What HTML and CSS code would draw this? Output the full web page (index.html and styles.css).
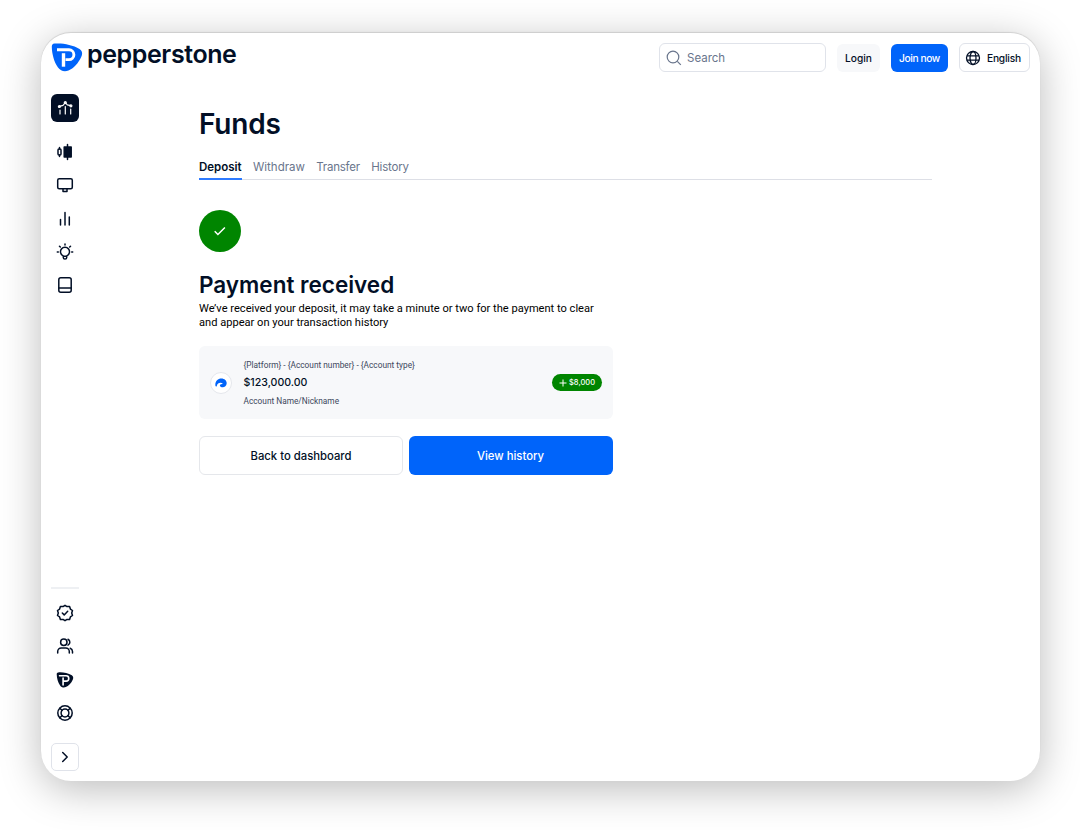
FILE: index.html
```html
<!DOCTYPE html>
<html lang="en">
<head>
    <meta charset="UTF-8">
    <meta name="viewport" content="width=device-width, initial-scale=1.0">
    <title>Pepperstone - Funds</title>
    <link rel="stylesheet" href="styles.css">
</head>
<body>
    <div class="window">
        <header class="header">
            <a class="logo">
                <svg class="logo-mark" viewBox="0 0 31 29">
                    <path d="M3 .6C10-.2 21 1.500 28 6c3 2 3.200 5 1.700 8C27 20 22 25.500 17 27.500c-4 1.500-8 .5-10.500-3C2.500 19 .5 11 .3 4 .2 2 1 .9 3 .6z" fill="#0064fa"/>
                    <path d="M5.500 6.800H17.500a4.900 4.900 0 0 1 0 9.800H14" fill="none" stroke="#fff" stroke-width="2.900"/>
                    <path d="M12 10.200v13.500" fill="none" stroke="#fff" stroke-width="3.400"/>
                </svg>
                <span class="logo-text">pepperstone</span>
            </a>
            <div class="header-actions">
                <div class="search">
                    <svg class="search-icon" viewBox="0 0 16 16"><circle cx="7" cy="7" r="5.800"/><path d="M11.300 11.300l3.500 3.500"/></svg>
                    <span>Search</span>
                </div>
                <button class="btn btn-login">Login</button>
                <button class="btn btn-join">Join now</button>
                <button class="btn btn-lang">
                    <svg class="globe" viewBox="0 0 16 16"><circle cx="8" cy="8" r="6.500"/><ellipse cx="8" cy="8" rx="3" ry="6.500"/><path d="M2 5.800h12M2 10.200h12"/></svg>
                    <span>English</span>
                </button>
            </div>
        </header>

        <div class="content">
            <nav class="sidebar">
                <a class="nav-active">
                    <svg class="icon icon-light" viewBox="0 0 18 18"><path d="M4 11v4M9.300 7.500V15M14.700 10v5M3.500 7.300L7 6.300l2.300-2.600 2 2.100 3.400.800"/><circle cx="3.400" cy="7.500" r="1"/><circle cx="9.300" cy="3.600" r="1"/><circle cx="14.900" cy="6.800" r="1"/></svg>
                </a>
                <div class="nav-group">
                    <svg class="icon" viewBox="0 0 18 18"><rect x="2" y="6" width="3" height="6" rx="1"/><path d="M3.500 4.500V6M3.500 12v1.500M11.500 1.500v15"/><rect x="8.200" y="4" width="7" height="10" fill="#020f26"/></svg>
                    <svg class="icon" viewBox="0 0 18 18"><rect x="1.700" y="2.700" width="14.600" height="10" rx="1.500"/><path d="M7 13v2.500h4V13"/></svg>
                    <svg class="icon" viewBox="0 0 18 18"><path d="M4.500 9.500v5.500M9 2.500V15M13.300 7V15"/></svg>
                    <svg class="icon" viewBox="0 0 18 18"><path d="M7.300 12.900a4.500 4.500 0 1 1 3.400 0v1.500a1.700 1.700 0 0 1-3.400 0zM7.300 13.200h3.400M9 1v1M1.300 9h1M15.700 9h1M3.500 3.200l.8.8M14.500 3.200l-.8.8"/></svg>
                    <svg class="icon" viewBox="0 0 18 18"><rect x="2.800" y="1.700" width="12.400" height="14.600" rx="2"/><path d="M3 12h12"/></svg>
                </div>
                <div class="nav-bottom">
                    <svg class="icon" viewBox="0 0 18 18"><path d="M9 1.300l2 1.300 2.600 0 .8 2.500 2.100 1.400L15.700 9l.8 2.500-2.100 1.400-.8 2.500H11L9 16.700l-2-1.300H4.400l-.8-2.500-2.100-1.400L2.300 9l-.8-2.500 2.100-1.400.8-2.500H7z"/><path d="M6.300 9l1.900 1.900 3.500-3.600"/></svg>
                    <svg class="icon" viewBox="0 0 18 18"><circle cx="7.800" cy="5.200" r="3.200"/><path d="M1.700 16v-1.500a3.500 3.500 0 0 1 3.500-3.500h4.600a3.500 3.500 0 0 1 3.500 3.500V16M12 2.300a3.200 3.200 0 0 1 0 5.800M14.200 11.300a3.500 3.500 0 0 1 2.300 3.200V16"/></svg>
                    <svg class="icon" viewBox="-1 -1 33 31">
                        <path d="M3 .6C10-.2 21 1.500 28 6c3 2 3.200 5 1.700 8C27 20 22 25.500 17 27.500c-4 1.500-8 .5-10.500-3C2.500 19 .5 11 .3 4 .2 2 1 .9 3 .6z" fill="#020f26" stroke="none"/>
                        <path d="M5.500 6.800H17.500a4.900 4.900 0 0 1 0 9.800H14M12 11v12.500" stroke="#fff" stroke-width="3"/>
                    </svg>
                    <svg class="icon" viewBox="0 0 18 18"><circle cx="9" cy="9" r="7.200"/><circle cx="9" cy="9" r="3.900"/><path d="M3.800 4.200l2.300 2.200M14.200 4.200l-2.300 2.200M3.800 13.800l2.300-2.200M14.200 13.800l-2.300-2.200"/></svg>
                </div>
                <button class="nav-toggle">
                    <svg class="icon" viewBox="0 0 18 18"><path d="M6.700 4.500L11.200 9l-4.500 4.500"/></svg>
                </button>
            </nav>

            <main class="main">
                <h1>Funds</h1>
                <div class="tabs">
                    <a class="tab active">Deposit</a>
                    <a class="tab">Withdraw</a>
                    <a class="tab tab-narrow">Transfer</a>
                    <a class="tab tab-narrow">History</a>
                </div>

                <div class="success">
                    <svg viewBox="0 0 14 14"><path d="M1.700 7.300l3.200 3.200 7-7"/></svg>
                </div>
                <h2>Payment received</h2>
                <p class="message">We’ve received your deposit, it may take a minute or two for the payment to clear<br>and appear on your transaction history</p>

                <div class="account">
                    <div class="account-icon">
                        <svg viewBox="0 0 12 10"><path d="M.4 7.800C-.2 3.300 2.700.400 6.300.400c3.400 0 5.500 2.300 5.400 4.800C11.600 8 9.600 9.300 7.700 9.300 6 9.300 4.600 8.500 4.900 7.200c.300-1 1.800-.9 3-1.700C5.600 3.800 2.300 4.800 1.800 7.900c-.2.900-1.200.9-1.400-.1z"/></svg>
                    </div>
                    <div class="account-info">
                        <span class="account-meta">{Platform} - {Account number} - {Account type}</span>
                        <span class="account-balance">$123,000.00</span>
                        <span class="account-meta">Account Name/Nickname</span>
                    </div>
                    <div class="amount">
                        <svg viewBox="0 0 8 8"><path d="M4 .5v7M.5 4h7"/></svg>
                        <span>$8,000</span>
                    </div>
                </div>

                <div class="buttons">
                    <button class="btn-large">Back to dashboard</button>
                    <button class="btn-large btn-primary">View history</button>
                </div>
            </main>
        </div>
    </div>
</body>
</html>
```
FILE: styles.css
```css
* {
    box-sizing: border-box;
}

body {
    margin: 0;
    height: 830px;
    padding: 33px 0 0 41px;
    overflow: hidden;
    background-color: #fff;
    color: #020f26;
    font-family: Inter, "Liberation Sans", sans-serif;
}

button {
    font-family: inherit;
    color: inherit;
    margin: 0;
    padding: 0;
}

svg {
    display: block;
    flex: none;
}

.window {
    width: 999px;
    height: 748px;
    display: flex;
    flex-direction: column;
    background-color: #fff;
    border-radius: 30px;
    box-shadow: 0 -1px 1px rgba(0, 0, 0, 0.12), 0 8px 42px rgba(0, 0, 0, 0.27);
}

/* Header */
.header {
    display: flex;
    justify-content: space-between;
    height: 50px;
    padding: 10px 10px 0 10px;
}

.logo {
    display: flex;
    gap: 4px;
}

.logo-mark {
    width: 32px;
    height: 29px;
}

.logo-text {
    font-size: 25px;
    font-weight: 600;
    line-height: 22px;
    letter-spacing: -0.4px;
}

.header-actions {
    display: flex;
    gap: 11px;
}

.search {
    display: flex;
    align-items: center;
    gap: 5px;
    width: 167px;
    height: 29px;
    padding-left: 6px;
    border: 1px solid #e0e3ea;
    border-radius: 6px;
    color: #69758c;
    font-size: 11.5px;
}

.search-icon {
    width: 16px;
    height: 16px;
    fill: none;
    stroke: #69758c;
    stroke-width: 1.2;
}

.btn {
    height: 28px;
    margin-top: 1px;
    border: none;
    border-radius: 6px;
    font-size: 10.2px;
    font-weight: 500;
}

.btn-login {
    width: 43px;
    background-color: #f7f8fa;
}

.btn-join {
    width: 57px;
    background-color: #0064fa;
    color: #fff;
    letter-spacing: -0.4px;
}

.btn-lang {
    display: flex;
    align-items: center;
    gap: 6px;
    width: 71px;
    height: 29px;
    margin-top: 0;
    padding-left: 5px;
    border: 1px solid #e0e3ea;
    background-color: #fff;
    letter-spacing: -0.2px;
}

.globe {
    width: 16px;
    height: 16px;
    fill: none;
    stroke: #020f26;
    stroke-width: 1.3;
}

/* Sidebar */
.content {
    display: flex;
    flex: 1;
}

.sidebar {
    display: flex;
    flex-direction: column;
    align-items: center;
    width: 48px;
    padding: 11px 0 10px;
}

.nav-active {
    display: flex;
    align-items: center;
    justify-content: center;
    width: 28px;
    height: 28px;
    border-radius: 6px;
    background-color: #020f26;
}

.icon {
    width: 18px;
    height: 18px;
    fill: none;
    stroke: #020f26;
    stroke-width: 1.5;
    stroke-linecap: round;
    stroke-linejoin: round;
}

.icon-light {
    stroke: #fff;
    stroke-width: 1.2;
}

.nav-group,
.nav-bottom {
    display: flex;
    flex-direction: column;
    align-items: center;
    gap: 15.3px;
}

.nav-group {
    margin-top: 21px;
}

.nav-bottom {
    width: 28px;
    margin-top: auto;
    padding-top: 15px;
    border-top: 2px solid #eef0f3;
}

.nav-toggle {
    display: flex;
    align-items: center;
    justify-content: center;
    width: 28px;
    height: 28px;
    margin-top: 21px;
    border: 1px solid #e0e3ea;
    border-radius: 5px;
    background-color: #fff;
}

/* Main */
.main {
    width: 733px;
    margin-left: 110px;
    padding-top: 23px;
}

h1 {
    margin: 0;
    font-size: 28px;
    font-weight: 600;
    line-height: 36px;
    letter-spacing: -0.2px;
}

.tabs {
    display: flex;
    gap: 11.3px;
    height: 38px;
    border-bottom: 1px solid #dddfe6;
}

.tab {
    height: 38px;
    padding-top: 17px;
    color: #69758c;
    font-size: 11.5px;
    line-height: 16px;
    white-space: nowrap;
}

.tab-narrow {
    letter-spacing: -0.2px;
}

.tab.active {
    border-bottom: 2px solid #2f7bff;
    color: #020f26;
    font-weight: 600;
}

.success {
    display: flex;
    align-items: center;
    justify-content: center;
    width: 42px;
    height: 42px;
    margin-top: 30px;
    border-radius: 50%;
    background-color: #008500;
}

.success svg {
    width: 14px;
    height: 14px;
    fill: none;
    stroke: #fff;
    stroke-width: 1.5;
}

h2 {
    margin: 18px 0 0;
    font-size: 22.5px;
    font-weight: 600;
    line-height: 30px;
}

.message {
    margin: 2px 0 0;
    color: #000;
    font-family: Roboto, sans-serif;
    font-size: 11.1px;
    line-height: 14px;
}

.account {
    display: flex;
    align-items: center;
    width: 414px;
    height: 73px;
    margin-top: 16px;
    padding: 0 11px;
    border-radius: 6px;
    background-color: #f7f8fa;
}

.account-icon {
    display: flex;
    align-items: center;
    justify-content: center;
    width: 22px;
    height: 22px;
    border: 1px solid #e5e7ec;
    border-radius: 50%;
    background-color: #fff;
}

.account-icon svg {
    width: 12px;
    height: 10px;
    fill: #0064fa;
}

.account-info {
    display: flex;
    flex-direction: column;
    flex: 1;
    gap: 2px;
    margin-left: 11.5px;
}

.account-meta {
    color: #3c475c;
    font-family: Roboto, sans-serif;
    font-size: 8.3px;
    line-height: 16px;
}

.account-balance {
    font-size: 10.6px;
    font-weight: 500;
    line-height: 16px;
}

.amount {
    display: flex;
    align-items: center;
    justify-content: center;
    gap: 2px;
    width: 50px;
    height: 17px;
    border-radius: 9px;
    background-color: #008500;
    color: #fff;
    font-size: 7.5px;
    font-weight: 500;
}

.amount svg {
    width: 8px;
    height: 8px;
    stroke: #fff;
    stroke-width: 1;
}

.buttons {
    display: flex;
    gap: 5.5px;
    margin-top: 17px;
}

.btn-large {
    width: 204px;
    height: 39px;
    border: 1px solid #e5e7eb;
    border-radius: 6px;
    background-color: #fff;
    font-size: 11.3px;
    font-weight: 500;
}

.btn-primary {
    border: none;
    background-color: #0064fa;
    color: #fff;
}
```
